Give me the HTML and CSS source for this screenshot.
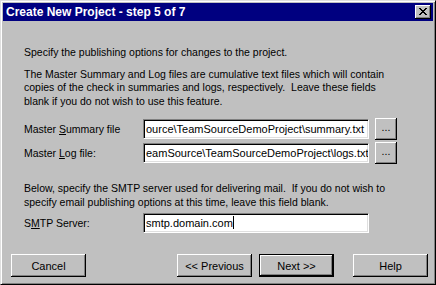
FILE: index.html
```html
<!DOCTYPE html>
<html lang="en">
<head>
    <meta charset="UTF-8">
    <title>Create New Project - step 5 of 7</title>
    <link rel="stylesheet" href="styles.css">
</head>
<body>
    <div class="dialog">
        <div class="titlebar">
            <span class="title">Create New Project - step 5 of 7</span>
            <button class="close-btn" aria-label="Close">
                <svg width="8" height="7" viewBox="0 0 8 7"><path d="M0 0h2v1h1v1h2V1h1V0h2v1H7v1H6v1H5v1h1v1h1v1h1v1H6V6H5V5H3v1H2v1H0V6h1V5h1V4h1V3H2V2H1V1H0z" fill="#000"/></svg>
            </button>
        </div>

        <div class="content">
            <p class="intro">Specify the publishing options for changes to the project.</p>
            <p class="info">The Master Summary and Log files are cumulative text files which will contain<br>copies of the check in summaries and logs, respectively.&nbsp; Leave these fields<br>blank if you do not wish to use this feature.</p>

            <div class="field-row first">
                <label class="field-label">Master <u>S</u>ummary file</label>
                <div class="textbox">ource\TeamSourceDemoProject\summary.txt</div>
                <button class="browse-btn">...</button>
            </div>
            <div class="field-row">
                <label class="field-label">Master <u>L</u>og file:</label>
                <div class="textbox">eamSource\TeamSourceDemoProject\logs.txt</div>
                <button class="browse-btn">...</button>
            </div>

            <p class="info smtp-note">Below, specify the SMTP server used for delivering mail.&nbsp; If you do not wish to<br>specify email publishing options at this time, leave this field blank.</p>

            <div class="field-row">
                <label class="field-label">S<u>M</u>TP Server:</label>
                <div class="textbox">smtp.domain.com<span class="caret"></span></div>
            </div>
        </div>

        <div class="button-bar">
            <button class="btn">Cancel</button>
            <button class="btn btn-prev">&lt;&lt; Previous</button>
            <button class="btn btn-default">Next &gt;&gt;</button>
            <button class="btn btn-help">Help</button>
        </div>
    </div>
</body>
</html>
```

FILE: styles.css
```css
body { margin: 0; background: #c0c0c0; font-family: 'Liberation Sans', Arial, sans-serif; font-size: 10.5px; color: #000; }
.dialog {
    width: 436px;
    height: 285px;
    box-sizing: border-box;
    background: #c0c0c0;
    border-top: 1px solid #dfdfdf;
    border-left: 1px solid #dfdfdf;
    border-right: 1px solid #000;
    border-bottom: 1px solid #000;
    box-shadow: inset 1px 1px #fff, inset -1px -1px #808080;
    padding: 2px;
    display: flex;
    flex-direction: column;
}
.titlebar {
    height: 18px;
    background: #000080;
    display: flex;
    align-items: center;
    justify-content: space-between;
    padding: 0 2px 0 3px;
}
.title { color: #fff; font-weight: bold; font-size: 12px; }
.close-btn {
    width: 16px;
    height: 14px;
    padding: 0;
    background: #c0c0c0;
    border: none;
    box-shadow: inset -1px -1px #000, inset 1px 1px #fff, inset -2px -2px #808080;
    display: flex;
    align-items: center;
    justify-content: center;
    padding-bottom: 1px;
}
.content { padding: 25px 0 0 21px; }
.content p { margin: 0; line-height: 13.5px; }
.info { margin-top: 8px !important; }
.smtp-note { margin-top: 19px !important; }

.field-row { display: flex; align-items: center; height: 20px; margin-top: 4px; }
.field-row.first { margin-top: 11px; }
.smtp-note + .field-row { margin-top: 4px; }
.field-label { width: 119px; }
.textbox {
    width: 226px;
    height: 20px;
    box-sizing: border-box;
    background: #fff;
    border-top: 1px solid #808080;
    border-left: 1px solid #808080;
    border-right: 1px solid #fff;
    border-bottom: 1px solid #fff;
    box-shadow: inset 1px 1px #000, inset -1px -1px #dfdfdf;
    padding: 2px 2px 0 2px;
    line-height: 15px;
    font-size: 11px;
    white-space: nowrap;
    overflow: hidden;
}
.caret { display: inline-block; width: 1px; height: 13px; background: #000; vertical-align: -2px; }
.browse-btn {
    width: 22px;
    height: 22px;
    margin-left: 6px;
    padding: 0 0 4px;
    font: inherit;
    background: #c0c0c0;
    border: none;
    box-shadow: inset -1px -1px #000, inset 1px 1px #fff, inset -2px -2px #808080;
}

.button-bar { display: flex; margin-top: auto; padding: 0 5px 5px 8px; }
.btn {
    width: 75px;
    height: 23px;
    font: inherit;
    font-size: 11px;
    background: #c0c0c0;
    border: none;
    box-shadow: inset -1px -1px #000, inset 1px 1px #fff, inset -2px -2px #808080;
    padding: 0;
}
.btn-prev { margin-left: auto; }
.btn-default {
    margin-left: 7px;
    box-shadow: inset 0 0 0 1px #000, inset -2px -2px #000, inset 2px 2px #fff, inset -3px -3px #808080;
}
.btn-help { margin-left: 19px; }
```
